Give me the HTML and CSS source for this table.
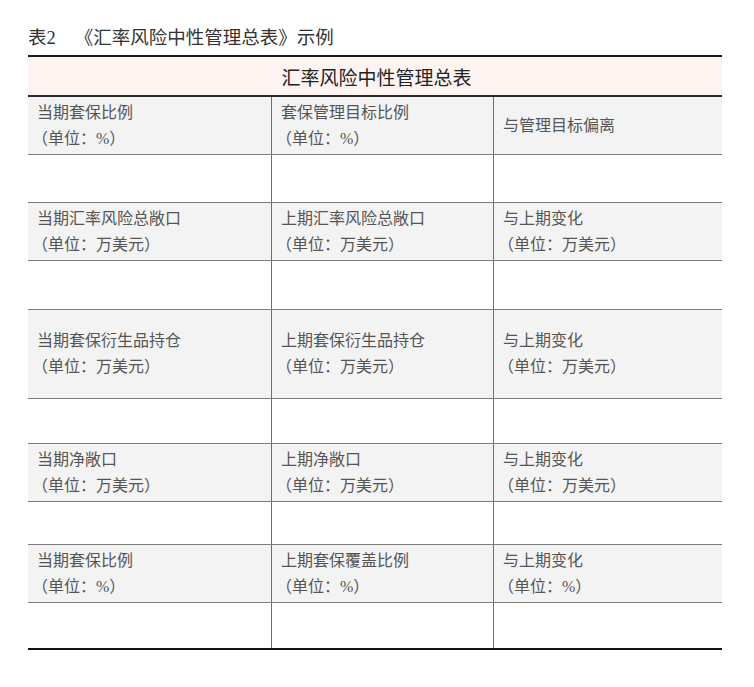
FILE: index.html
```html
<!DOCTYPE html>
<html lang="zh-CN">
<head>
<meta charset="utf-8">
<title>汇率风险中性管理总表</title>
<link rel="stylesheet" href="styles.css">
</head>
<body>
<div class="page">
  <div class="caption"><span class="cap-no">表2</span><span class="cap-name">《汇率风险中性管理总表》示例</span></div>
  <div class="sheet">
    <div class="title">汇率风险中性管理总表</div>

    <div class="row head h58">
      <div class="cell"><span>当期套保比例</span><span class="unit">（单位：%）</span></div>
      <div class="cell"><span>套保管理目标比例</span><span class="unit">（单位：%）</span></div>
      <div class="cell"><span>与管理目标偏离</span></div>
    </div>
    <div class="row blank e48"><div class="cell"></div><div class="cell"></div><div class="cell"></div></div>

    <div class="row head h58">
      <div class="cell"><span>当期汇率风险总敞口</span><span class="unit">（单位：万美元）</span></div>
      <div class="cell"><span>上期汇率风险总敞口</span><span class="unit">（单位：万美元）</span></div>
      <div class="cell"><span>与上期变化</span><span class="unit">（单位：万美元）</span></div>
    </div>
    <div class="row blank e49"><div class="cell"></div><div class="cell"></div><div class="cell"></div></div>

    <div class="row head h89">
      <div class="cell"><span>当期套保衍生品持仓</span><span class="unit">（单位：万美元）</span></div>
      <div class="cell"><span>上期套保衍生品持仓</span><span class="unit">（单位：万美元）</span></div>
      <div class="cell"><span>与上期变化</span><span class="unit">（单位：万美元）</span></div>
    </div>
    <div class="row blank e45"><div class="cell"></div><div class="cell"></div><div class="cell"></div></div>

    <div class="row head h58">
      <div class="cell"><span>当期净敞口</span><span class="unit">（单位：万美元）</span></div>
      <div class="cell"><span>上期净敞口</span><span class="unit">（单位：万美元）</span></div>
      <div class="cell"><span>与上期变化</span><span class="unit">（单位：万美元）</span></div>
    </div>
    <div class="row blank e43"><div class="cell"></div><div class="cell"></div><div class="cell"></div></div>

    <div class="row head h58">
      <div class="cell"><span>当期套保比例</span><span class="unit">（单位：%）</span></div>
      <div class="cell"><span>上期套保覆盖比例</span><span class="unit">（单位：%）</span></div>
      <div class="cell"><span>与上期变化</span><span class="unit">（单位：%）</span></div>
    </div>
    <div class="row blank last e47"><div class="cell"></div><div class="cell"></div><div class="cell"></div></div>
  </div>
</div>
</body>
</html>
```

FILE: styles.css
```css
* { box-sizing: border-box; }
html, body { margin: 0; padding: 0; background: #ffffff; }
body {
  font-family: "Liberation Serif", "Noto Sans CJK SC", serif;
}
.page {
  padding: 26px 33px 0 28px;
  width: 754px;
}
.caption {
  font-size: 18.5px;
  line-height: 24px;
  color: #333333;
  margin-bottom: 5px;
  white-space: nowrap;
  display: flex;
}
.cap-name { margin-left: 19px; }
.sheet {
  width: 694px;
}
.title {
  height: 42px;
  border-top: 2px solid #1a1a1a;
  border-bottom: 2px solid #2a2a2a;
  background: #fdf3f0;
  font-size: 19px;
  color: #222222;
  display: flex;
  align-items: center;
  justify-content: center;
  padding-left: 3px;
}
.row {
  display: grid;
  grid-template-columns: 244px 222px 228px;
  border-bottom: 1px solid #7c7c7c;
}
.row.head { background: #f3f3f3; }
.row.blank { background: #ffffff; }
.row.last { border-bottom: 2px solid #111111; }
.h58 { height: 58px; }
.h89 { height: 89px; }
.e48 { height: 48px; }
.e49 { height: 49px; }
.e45 { height: 45px; }
.e43 { height: 43px; }
.e47 { height: 47px; }
.cell {
  display: flex;
  flex-direction: column;
  align-items: flex-start;
  justify-content: center;
  padding-left: 9px;
  font-size: 16px;
  line-height: 26px;
  color: #555555;
  white-space: nowrap;
}
.unit { margin-left: -5px; }
.row .cell:nth-child(1),
.row .cell:nth-child(2) {
  border-right: 1px solid #6e6e6e;
}
```
